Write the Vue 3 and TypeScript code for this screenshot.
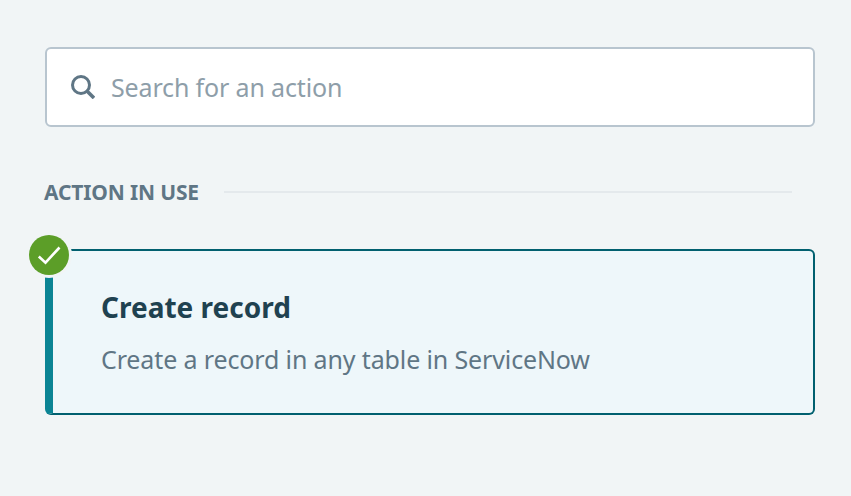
<script setup lang="ts">
const placeholder: string = 'Search for an action'
</script>

<template>
  <main class="page">
    <label class="search">
      <svg class="search-icon" viewBox="0 0 24 24" width="24" height="24" aria-hidden="true">
        <circle cx="10" cy="10" r="8.5" fill="none" stroke="#5f7685" stroke-width="3" />
        <path d="M16 16 L23 23" fill="none" stroke="#5f7685" stroke-width="3.6" />
      </svg>
      <input class="search-input" type="text" :placeholder="placeholder" />
    </label>

    <div class="section-head">
      <span class="section-title">ACTION IN USE</span>
      <span class="section-rule"></span>
    </div>

    <section class="card">
      <span class="badge">
        <svg viewBox="0 0 24 24" width="24" height="24" aria-hidden="true">
          <path d="M1.8 13.5 L8.5 19.6 L22.5 4.5" fill="none" stroke="#fff" stroke-width="2.6" />
        </svg>
      </span>
      <h2 class="card-title">Create record</h2>
      <p class="card-text">Create a record in any table in ServiceNow</p>
    </section>
  </main>
</template>

<style>
html, body { margin: 0; background: #f1f5f6; }
</style>

<style scoped>
.page {
  box-sizing: border-box;
  width: 851px;
  height: 496px;
  padding: 47px 36px 0 45px;
  background: #f1f5f6;
  display: flex;
  flex-direction: column;
  font-family: "Noto Sans", "Open Sans", sans-serif;
}
.search {
  box-sizing: border-box;
  height: 80px;
  display: flex;
  align-items: center;
  gap: 16px;
  padding: 0 24px;
  background: #fff;
  border: 2px solid #b8c5cf;
  border-radius: 6px;
}
.search-icon { flex: none; }
.search-input {
  flex: 1;
  min-width: 0;
  border: 0;
  outline: 0;
  padding: 0;
  background: transparent;
  font: inherit;
  font-size: 25px;
  letter-spacing: -0.15px;
}
.search-input::placeholder { color: #8e9ea9; opacity: 1; }
.section-head {
  display: flex;
  align-items: center;
  gap: 25px;
  height: 32px;
  margin-top: 49px;
  padding-right: 23px;
}
.section-title {
  margin-left: -1px;
  font-size: 21px;
  font-weight: 700;
  letter-spacing: -0.15px;
  color: #5f7685;
  white-space: nowrap;
}
.section-rule {
  flex: 1;
  height: 2px;
  background: #e4e9ec;
}
.card {
  position: relative;
  box-sizing: border-box;
  height: 166px;
  margin-top: 41px;
  padding: 38px 48px 0;
  background: #eef7fa;
  border: 2px solid #01606f;
  border-left: 8px solid #0b8494;
  border-radius: 6px;
}
.badge {
  position: absolute;
  left: -24px;
  top: -16px;
  width: 40px;
  height: 40px;
  border-radius: 50%;
  background: #5c9e28;
  box-shadow: 0 0 0 3px #f1f5f6;
  display: flex;
  align-items: center;
  justify-content: center;
}
.card-title {
  margin: 0;
  font-size: 28px;
  line-height: 36px;
  font-weight: 700;
  color: #1f4250;
}
.card-text {
  margin: 17px 0 0;
  font-size: 25px;
  line-height: 34px;
  letter-spacing: -0.13px;
  color: #5f7685;
}
</style>
